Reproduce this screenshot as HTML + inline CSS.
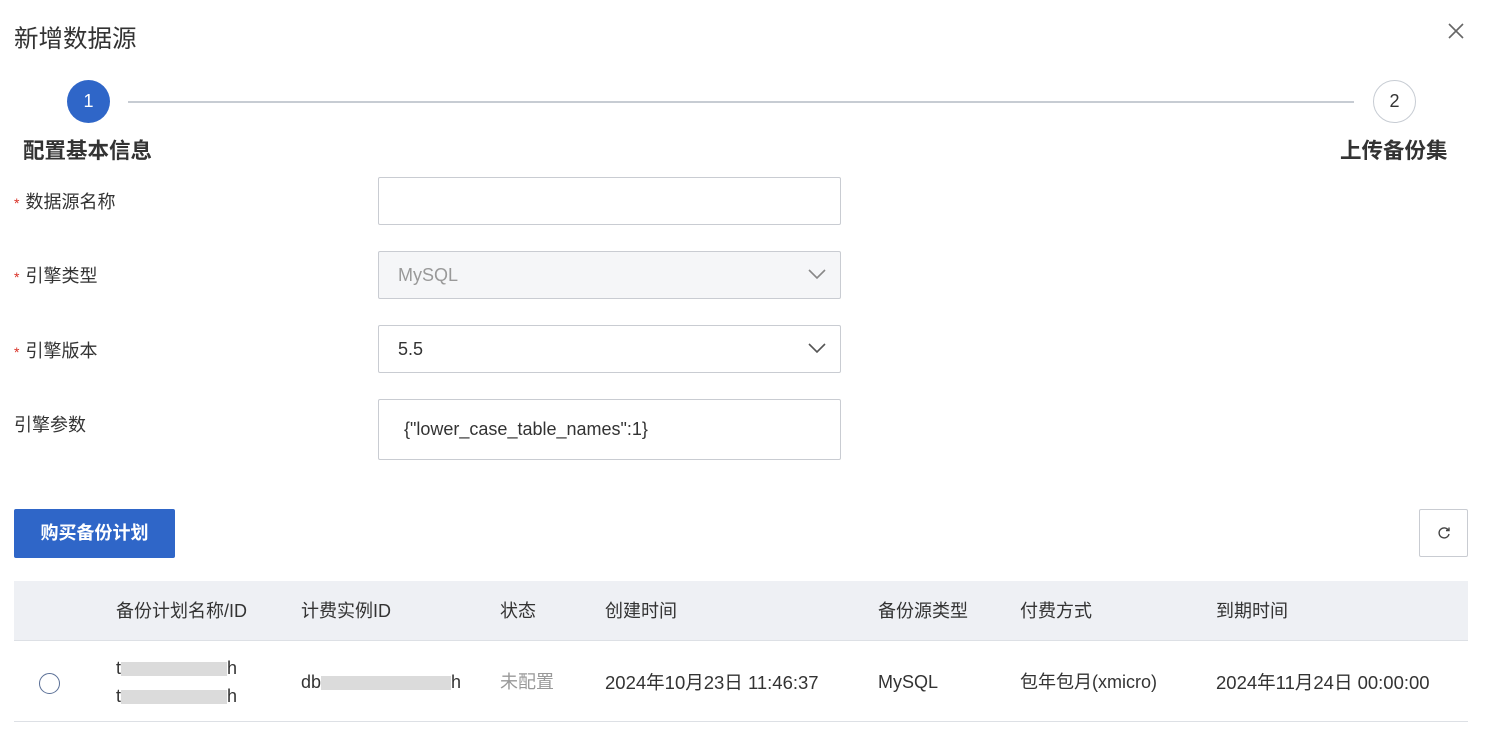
<!DOCTYPE html>
<html><head><meta charset="utf-8"><style>
body{margin:0;width:1485px;height:747px;background:#fff;font-family:"Liberation Sans","Noto Sans CJK SC",sans-serif;color:#333;position:relative;overflow:hidden}
.a{position:absolute;white-space:nowrap;line-height:1.2}
.lbl{font-size:18px;color:#333}
.req{color:#d93026;font-size:14px;margin-right:6px}
.inp{position:absolute;left:378px;width:463px;border:1px solid #c9ccd2;border-radius:2px;background:#fff;box-sizing:border-box;font-size:18px;padding-left:19px}
.chev{position:absolute;right:14px;top:50%;margin-top:-6px}
.h{font-size:18px;color:#333}
.v{font-size:18.5px}
.blur{display:inline-block;height:14px;background:#ccc;opacity:.7;vertical-align:middle}
</style></head><body>
<div class="a" style="left:14px;top:25px;font-size:24.5px;color:#333">新增数据源</div>
<svg class="a" style="left:1447px;top:22px" width="18" height="18"><path d="M2 2L16 16M16 2L2 16" stroke="#666" stroke-width="1.6"/></svg>
<div class="a" style="left:67px;top:80px;width:43px;height:43px;border-radius:50%;background:#2f66c8;color:#fff;font-size:18px;text-align:center;line-height:43px">1</div>
<div class="a" style="left:128px;top:101px;width:1226px;height:2px;background:#c7ccd3"></div>
<div class="a" style="left:1373px;top:80px;width:41px;height:41px;border-radius:50%;border:1px solid #c7ccd3;color:#333;font-size:18px;text-align:center;line-height:41px">2</div>
<div class="a" style="left:23px;top:139px;font-size:21.5px;font-weight:bold;color:#333">配置基本信息</div>
<div class="a" style="left:1340px;top:139px;font-size:21.5px;font-weight:bold;color:#333">上传备份集</div>

<div class="a lbl" style="left:14px;top:192px"><span class="req">*</span>数据源名称</div>
<div class="inp" style="top:177px;height:48px"></div>
<div class="a lbl" style="left:14px;top:266px"><span class="req">*</span>引擎类型</div>
<div class="inp" style="top:251px;height:48px;background:#f5f6f8;color:#999;line-height:46px">MySQL<svg class="chev" width="18" height="11"><path d="M1 1L9 9L17 1" stroke="#888" stroke-width="1.6" fill="none"/></svg></div>
<div class="a lbl" style="left:14px;top:341px"><span class="req">*</span>引擎版本</div>
<div class="inp" style="top:325px;height:48px;color:#333;line-height:46px">5.5<svg class="chev" width="18" height="11"><path d="M1 1L9 9L17 1" stroke="#555" stroke-width="1.6" fill="none"/></svg></div>
<div class="a lbl" style="left:14px;top:415px">引擎参数</div>
<div class="inp" style="top:399px;height:61px;color:#333;line-height:59px;padding-left:25px">{"lower_case_table_names":1}</div>

<div class="a" style="left:14px;top:509px;width:161px;height:49px;background:#2f66c8;border-radius:2px;color:#fff;font-weight:bold;font-size:18px;text-align:center;line-height:49px">购买备份计划</div>
<div class="a" style="left:1419px;top:509px;width:49px;height:48px;border:1px solid #c9ccd2;border-radius:2px;box-sizing:border-box"><svg style="position:absolute;left:17px;top:16px" width="14" height="14"><path d="M11.5 4.5A5 5 0 1 0 12 8" stroke="#444" stroke-width="1.4" fill="none"/><path d="M9 4.5H12V1.5" stroke="#444" stroke-width="1.4" fill="none"/></svg></div>

<div class="a" style="left:14px;top:581px;width:1454px;height:59px;background:#eef0f4;border-bottom:1px solid #dde0e5"></div>
<div class="a h" style="left:116px;top:601px">备份计划名称/ID</div>
<div class="a h" style="left:301px;top:601px">计费实例ID</div>
<div class="a h" style="left:500px;top:601px">状态</div>
<div class="a h" style="left:605px;top:601px">创建时间</div>
<div class="a h" style="left:878px;top:601px">备份源类型</div>
<div class="a h" style="left:1020px;top:601px">付费方式</div>
<div class="a h" style="left:1216px;top:601px">到期时间</div>
<div class="a" style="left:39px;top:673px;width:21px;height:21px;border:1.5px solid #5a6f96;border-radius:50%;box-sizing:border-box"></div>
<div class="a h" style="left:116px;top:658px">t<span class="blur" style="width:106px"></span>h</div>
<div class="a h" style="left:116px;top:686px">t<span class="blur" style="width:106px"></span>h</div>
<div class="a h" style="left:301px;top:672px">db<span class="blur" style="width:130px"></span>h</div>
<div class="a h" style="left:500px;top:672px;color:#999">未配置</div>
<div class="a h v" style="left:605px;top:672px">2024年10月23日 11:46:37</div>
<div class="a h" style="left:878px;top:672px">MySQL</div>
<div class="a h" style="left:1020px;top:672px">包年包月(xmicro)</div>
<div class="a h v" style="left:1216px;top:672px">2024年11月24日 00:00:00</div>
<div class="a" style="left:14px;top:721px;width:1454px;height:1px;background:#dde0e5"></div>
</body></html>
